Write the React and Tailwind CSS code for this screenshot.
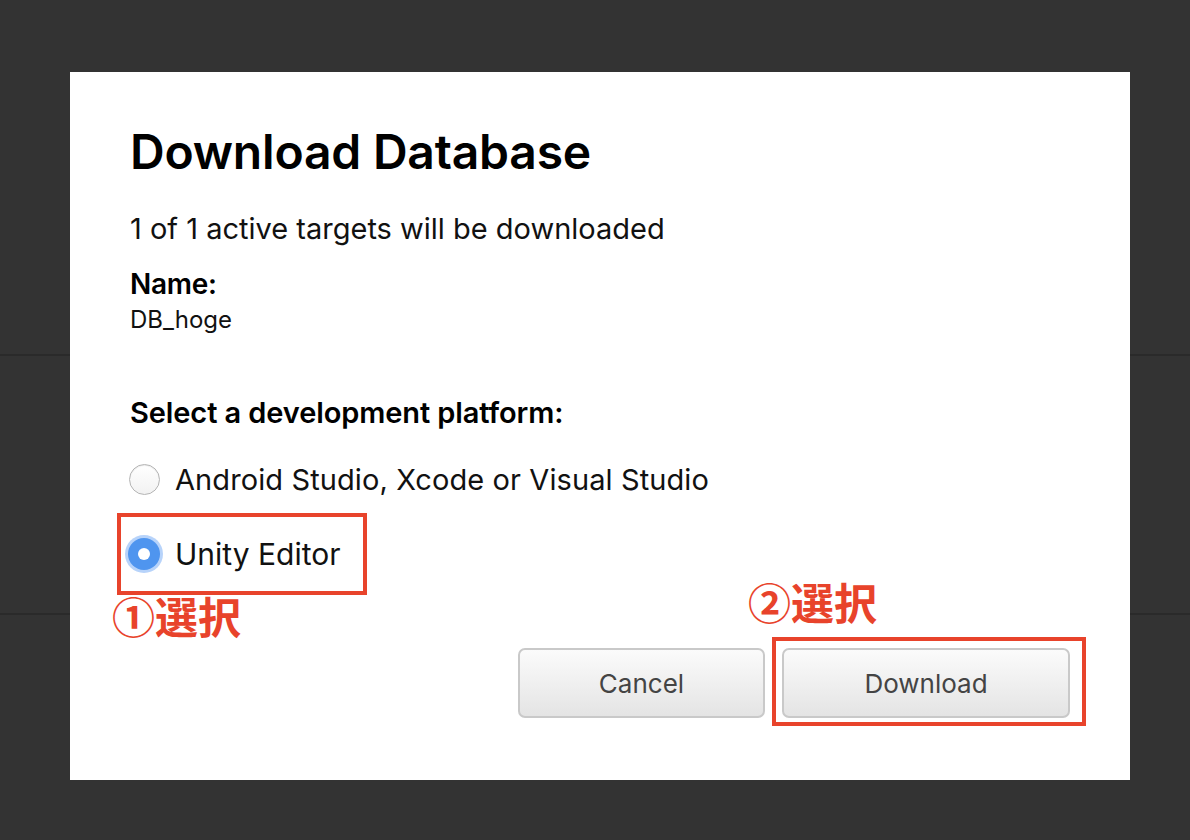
import { useState } from 'react'

const font = { fontFamily: 'Inter, "Noto Sans", sans-serif' }
const jp = { fontFamily: '"Noto Sans CJK JP", sans-serif' }

function Radio({ checked }) {
  if (checked) {
    return (
      <span className="flex h-[38px] w-[38px] flex-shrink-0 items-center justify-center rounded-full bg-[#b7d3fa]">
        <span className="flex h-[32px] w-[32px] items-center justify-center rounded-full bg-[#4f95ef]">
          <span className="h-[12px] w-[12px] rounded-full bg-white" />
        </span>
      </span>
    )
  }
  return (
    <span className="flex h-[38px] w-[38px] flex-shrink-0 items-center justify-center">
      <span className="h-[31px] w-[31px] rounded-full border border-[#b4b4b4] bg-gradient-to-b from-white to-[#f2f2f2] shadow-[inset_0_1px_1px_rgba(0,0,0,0.08)]" />
    </span>
  )
}

export default function App() {
  const [platform, setPlatform] = useState('unity')

  return (
    <div className="flex min-h-screen w-full flex-col bg-[#333333]" style={font}>
      <div className="relative flex h-[840px] w-full pl-[70px] pt-[72px]">
        {/* faint page rows behind the overlay */}
        <div className="pointer-events-none absolute left-0 right-0 top-[354px] h-[2px] bg-[#2a2a2a]" />
        <div className="pointer-events-none absolute left-0 right-0 top-[613px] h-[2px] bg-[#2a2a2a]" />

        <div className="relative z-10 flex h-[708px] w-[1060px] flex-col bg-white pl-[60px] pr-[60px] pt-[56px]">
          <h1 className="text-[48px] font-semibold leading-none tracking-[-0.2px] text-black">Download Database</h1>
          <p className="mt-[38px] text-[29px] leading-none text-[#111]">1 of 1 active targets will be downloaded</p>
          <p className="mt-[27px] text-[28px] font-semibold leading-none tracking-[-0.3px] text-black">Name:</p>
          <p className="mt-[10px] text-[24px] leading-none text-[#111]">DB_hoge</p>

          <p className="mt-[66px] text-[29px] font-semibold leading-none tracking-[-0.1px] text-black">
            Select a development platform:
          </p>

          <button
            className="ml-[-5px] mt-[33px] flex items-center gap-[12px] text-left"
            onClick={() => setPlatform('native')}
          >
            <Radio checked={platform === 'native'} />
            <span className="text-[29px] leading-none tracking-[0.1px] text-[#111]">
              Android Studio, Xcode or Visual Studio
            </span>
          </button>

          <div className="relative mt-[37px] self-start">
            <button
              className="ml-[-5px] flex items-center gap-[12px] text-left"
              onClick={() => setPlatform('unity')}
            >
              <Radio checked={platform === 'unity'} />
              <span className="text-[30px] leading-none text-[#111]">Unity Editor</span>
            </button>
            {/* annotation */}
            <div className="pointer-events-none absolute left-[-13px] top-[-22px] h-[82px] w-[250px] border-4 border-[#e8432b]" />
            <span
              className="pointer-events-none absolute left-[-18px] top-[59px] whitespace-nowrap text-[43px] font-bold leading-none text-[#e8432b]"
              style={jp}
            >
              ①選択
            </span>
          </div>

          <div className="mt-[75px] flex justify-end gap-[17px]">
            <button className="h-[70px] w-[247px] rounded-[7px] border-2 border-[#c9c9c9] bg-gradient-to-b from-[#fbfbfb] to-[#e4e4e4] text-[26px] text-[#444]">
              Cancel
            </button>
            <div className="relative">
              <button className="h-[70px] w-[288px] rounded-[7px] border-2 border-[#c9c9c9] bg-gradient-to-b from-[#fbfbfb] to-[#e4e4e4] text-[26px] text-[#444]">
                Download
              </button>
              <div className="pointer-events-none absolute left-[-10px] top-[-11px] h-[89px] w-[314px] border-4 border-[#e8432b]" />
              <span
                className="pointer-events-none absolute left-[-34px] top-[-68px] whitespace-nowrap text-[43px] font-bold leading-none text-[#e8432b]"
                style={jp}
              >
                ②選択
              </span>
            </div>
          </div>
        </div>
      </div>
    </div>
  )
}
